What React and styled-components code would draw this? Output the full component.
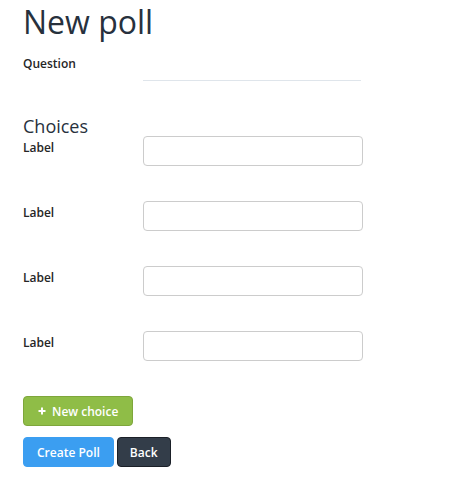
import React from "react";
import styled, { createGlobalStyle } from "styled-components";

const Global = createGlobalStyle`
  html, body { margin: 0; padding: 0; background: #ffffff; }
  body { font-family: "Open Sans", "Liberation Sans", sans-serif; color: #2a2a2a; }
  * { box-sizing: border-box; }
`;

const Page = styled.div`
  padding: 2px 23px 0;
`;

const Title = styled.h1`
  margin: 0;
  font-size: 32px;
  line-height: 40px;
  font-weight: 400;
  color: #27313d;
`;

const Row = styled.div`
  display: grid;
  grid-template-columns: 120px 220px;
  align-items: start;
  margin-top: ${(p) => p.$mt || 0}px;
`;

const Label = styled.label`
  display: block;
  padding-top: 3px;
  font-size: 12px;
  line-height: 17px;
  font-weight: 600;
  color: #262626;
`;

const LineInput = styled.input`
  display: block;
  width: 218px;
  height: 29px;
  border: none;
  border-bottom: 1px solid #dfe5eb;
  outline: none;
  padding: 0;
  background: transparent;
`;

const BoxInput = styled.input`
  display: block;
  width: 220px;
  height: 30px;
  border: 1px solid #cccccc;
  border-radius: 4px;
  padding: 6px 12px;
  font-size: 13px;
  outline: none;
  background: #fff;
`;

const SubTitle = styled.h3`
  margin: 35px 0 0;
  font-size: 18px;
  line-height: 20px;
  font-weight: 400;
  color: #27313d;
`;

const ChoiceList = styled.div`
  display: flex;
  flex-direction: column;
  gap: 35px;
`;

const variants = {
  green: { bg: "#8fbd47", border: "#7ea63b" },
  blue: { bg: "#3b9ef1", border: "#3b9ef1" },
  dark: { bg: "#333d49", border: "#1b2028" },
};

const Button = styled.button`
  display: inline-flex;
  align-items: center;
  gap: 6px;
  height: 30px;
  padding: 0 ${(p) => p.$px || 13}px;
  border: 1px solid ${(p) => variants[p.$v].border};
  border-radius: 4px;
  background: ${(p) => variants[p.$v].bg};
  color: #ffffff;
  font-family: "Open Sans", "Liberation Sans", sans-serif;
  font-size: 12px;
  font-weight: 600;
  cursor: pointer;
`;

const NewChoiceWrap = styled.div`
  margin-top: 35px;
`;

const Actions = styled.div`
  display: flex;
  gap: 3px;
  margin-top: 11px;
`;

const PlusIcon = () => (
  <svg width="8" height="8" viewBox="0 0 8 8" aria-hidden="true">
    <path d="M4 0.5V7.5M0.5 4H7.5" stroke="#fff" strokeWidth="2" />
  </svg>
);

export default function App() {
  const choices = [0, 1, 2, 3];
  return (
    <Page>
      <Global />
      <Title>New poll</Title>
      <Row $mt={10}>
        <Label>Question</Label>
        <LineInput />
      </Row>
      <SubTitle>Choices</SubTitle>
      <ChoiceList>
        {choices.map((c) => (
          <Row key={c}>
            <Label>Label</Label>
            <BoxInput />
          </Row>
        ))}
      </ChoiceList>
      <NewChoiceWrap>
        <Button $v="green" $px={14}>
          <PlusIcon />
          New choice
        </Button>
      </NewChoiceWrap>
      <Actions>
        <Button $v="blue" $px={13}>Create Poll</Button>
        <Button $v="dark" $px={12}>Back</Button>
      </Actions>
    </Page>
  );
}
